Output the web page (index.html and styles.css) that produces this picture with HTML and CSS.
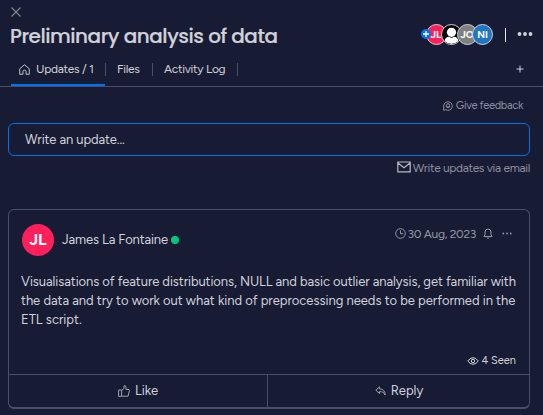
FILE: index.html
```html
<!DOCTYPE html>
<html lang="en">
<head>
<meta charset="utf-8">
<title>Preliminary analysis of data</title>
<link rel="stylesheet" href="styles.css">
</head>
<body>
<header class="header">
  <svg class="close" width="10" height="10" viewBox="0 0 10 10"><path d="M.5.5l9 9M9.5.5l-9 9"/></svg>
  <div class="title-row">
    <h1><span class="title">Preliminary analysis of data</span></h1>
    <div class="people">
      <span class="add"><svg width="10" height="10" viewBox="0 0 10 10"><path d="M5 2v6M2 5h6"/></svg></span>
      <span class="avatar pink">JL</span>
      <span class="avatar person"><svg width="19" height="19" viewBox="0 0 19 19"><circle cx="9.5" cy="7.300" r="4.600"/><path d="M2.500 16c.5-3 2.500-4.300 4.500-4.300q2.500 2 5 0c2 0 4 1.300 4.500 4.300q-3 3-7 3t-7-3z"/></svg></span>
      <span class="avatar gray">JO</span>
      <span class="avatar blue">NI</span>
    </div>
    <i class="rule"></i>
    <svg class="more" width="16" height="6" viewBox="0 0 16 6"><circle cx="2.500" cy="3" r="1.900"/><circle cx="8" cy="3" r="1.900"/><circle cx="13.500" cy="3" r="1.900"/></svg>
  </div>
  <nav class="tabs">
    <a class="tab active"><svg class="icon" width="11" height="11" viewBox="0 0 12 12"><path d="M.8 5.200L6 .8l5.200 4.400v6H7.700V8.300q0-1.600-1.700-1.600T4.300 8.300v2.900H.8z"/></svg><span class="t-updates">Updates / 1</span></a>
    <a class="tab files"><span class="t-files">Files</span></a>
    <a class="tab log"><span class="t-log">Activity Log</span></a>
    <svg class="plus" width="8" height="8" viewBox="0 0 8 8"><path d="M4 .5v7M.5 4h7"/></svg>
  </nav>
</header>
<main>
  <div class="feedback"><svg class="icon" width="10" height="10" viewBox="0 0 10 10"><path d="M.7 9.300V5a4.300 4.300 0 1 1 2 3.700zM2.900 5.500q2.100 2.500 4.200 0"/><circle cx="5" cy="4.400" r="1.700"/></svg><span class="t-feedback">Give feedback</span></div>
  <div class="composer"><span class="t-write">Write an update...</span></div>
  <div class="email"><svg class="icon" width="14" height="12" viewBox="0 0 14 12"><path d="M.8 1h12.400v9.800H.8zM1 2l6 4.800L13 2"/></svg><span class="t-email">Write updates via email</span></div>
  <article class="card">
    <div class="author">
      <span class="face">JL</span>
      <span class="t-name">James La Fontaine</span><i class="online"></i>
      <div class="meta">
        <svg class="icon" width="11" height="11" viewBox="0 0 11 11"><circle cx="5.500" cy="5.500" r="4.800"/><path d="M5.500 2.500v3.200h2.700"/></svg>
        <span class="t-date">30 Aug, 2023</span>
        <svg class="icon bell" width="10" height="11" viewBox="0 0 10 11"><path d="M.8 8.500h8.400L8 6.800V4a3 3 0 0 0-6 0v2.800zM3.800 9.800q1.200 1 2.400 0"/></svg>
        <svg class="dots" width="10" height="3" viewBox="0 0 10 3"><circle cx="1.300" cy="1.500" r=".9"/><circle cx="5" cy="1.500" r=".9"/><circle cx="8.700" cy="1.500" r=".9"/></svg>
      </div>
    </div>
    <p class="text"><span class="l1">Visualisations of feature distributions, NULL and basic outlier analysis, get familiar with</span><br><span class="l2">the data and try to work out what kind of preprocessing needs to be performed in the</span><br><span class="l3">ETL script.</span></p>
    <div class="seen"><svg class="icon" width="12" height="8" viewBox="0 0 12 8"><path d="M.7 4Q3 .7 6 .7T11.300 4Q9 7.300 6 7.300T.7 4z"/><circle cx="6" cy="4" r="1.700"/></svg><span class="t-seen">4 Seen</span></div>
    <footer class="actions">
      <button class="action like"><svg class="icon" width="12" height="12" viewBox="0 0 12 12"><path d="M.6 5h3v6.300h-3zM3.600 5.500L6 3.500V.8q2-.5 2 1.500v2.200h3q.7.600.3 1.500l-1.200 5.200H3.600"/></svg><span class="t-like">Like</span></button>
      <button class="action reply"><svg class="icon" width="11" height="10" viewBox="0 0 11 10"><path d="M4.500.9L.8 4.200l3.700 3.300V5.600q4-.3 5.700 3.500Q10 3 4.500 2.800z"/></svg><span class="t-reply">Reply</span></button>
    </footer>
  </article>
</main>
</body>
</html>
```
FILE: styles.css
```css
* { box-sizing: border-box; }
body { margin: 0; height: 415px; overflow: hidden; background: #181b34; color: #d0d2da; font: 12px/16px Figtree, Inter, sans-serif; white-space: nowrap; }
svg { display: block; flex: none; overflow: visible; }
.icon { fill: none; stroke: currentColor; stroke-width: 1; }
.header { height: 87px; border-bottom: 1px solid #4b4e69; padding: 7px 9px 0 11px; }
.close { stroke: #85868d; stroke-width: 1.1; }
.title-row { display: flex; align-items: center; height: 32px; margin-top: 3px; }
h1 { margin: 0 0 0 -1px; flex: 1; font: 500 20px/28px Poppins, Inter, sans-serif; }
.title { letter-spacing: -.49px; -webkit-text-stroke: .2px currentColor; }
.people { display: flex; align-items: center; position: relative; margin: -4px 1px 0 0; }
.add { position: absolute; left: -5px; top: 5px; z-index: 2; width: 10px; height: 10px; border-radius: 50%; background: #0073ea; }
.add svg { stroke: #fff; stroke-width: 1.3; }
.avatar { width: 21px; height: 21px; border: 1px solid #d0d2da; border-radius: 50%; margin-left: -5.5px; display: flex; align-items: center; justify-content: center; color: #fff; font: 700 10px/19px Figtree, Inter, sans-serif; overflow: hidden; }
.avatar.pink { margin-left: 0; background: #ff1f5a; }
.person { background: #000; }
.person svg { fill: #fff; }
.gray { background: #808080; }
.blue { background: #1f76c2; }
.rule { width: 1px; height: 14px; background: #e8e8ee; margin: -2px 12px 0 11px; }
.more { fill: #d0d2da; margin: -5px 1px 0 -1px; }
.tabs { display: flex; height: 34px; align-items: stretch; }
.tab { display: flex; align-items: center; position: relative; }
.tab::after { content: ""; position: absolute; right: 0; top: 11px; width: 1px; height: 13px; background: #4b4e69; }
.active { width: 94px; margin-right: 1px; padding: 2px 0 0 8px; gap: 6px; border-bottom: 2px solid #0073ea; }
.active::after { right: -1px; }
.files { width: 47px; padding-left: 11px; }
.log { width: 85px; padding-left: 11px; }
.t-updates, .t-files, .t-log { letter-spacing: -.3px; }
.plus { margin: 13px 10px 0 auto; stroke: #d0d2da; }
main { padding: 0 13px 0 8px; }
.feedback { display: flex; align-items: center; justify-content: flex-end; height: 36px; gap: 3px; padding: 1px 7px 0 0; color: #8e90a0; font-size: 11px; letter-spacing: -.3px; }
.composer { height: 33px; border: 1px solid #0073ea; border-radius: 6px; padding: 8px 16px; font-size: 13px; letter-spacing: -.1px; }
.email { display: flex; align-items: center; justify-content: flex-end; height: 24px; gap: 2px; color: #8e90a0; letter-spacing: -.35px; }
.email svg { color: #b8bac6; stroke-width: 1.2; margin-top: -2px; }
.card { height: 200px; margin-top: 29px; border: 1px solid #4b4e69; border-bottom-width: 2px; border-radius: 6px; display: flex; flex-direction: column; }
.author { display: flex; align-items: center; padding: 14px 17px 0 13px; height: 46px; }
.face { width: 32px; height: 32px; border-radius: 50%; background: #ff1f5a; color: #fff; text-align: center; font: 700 16px/32px Figtree, Inter, sans-serif; margin-right: 8px; }
.t-name { font-size: 13px; letter-spacing: -.12px; }
.online { width: 8px; height: 8px; border-radius: 50%; background: #00c875; margin-left: 3px; }
.meta { display: flex; align-items: center; margin: -13px 0 0 auto; color: #9699a6; }
.t-date { margin: 0 7px 0 2px; letter-spacing: -.33px; }
.dots { margin-left: 9px; fill: currentColor; }
.text { margin: 16px 0 0 12px; font-size: 13px; line-height: 19px; }
.l1 { letter-spacing: -.08px; }
.l2 { letter-spacing: -.025px; }
.seen { display: flex; align-items: center; justify-content: flex-end; margin: 24px 13px 0 0; gap: 3px; font-size: 11px; }
.actions { display: flex; margin-top: auto; height: 33px; border-top: 1px solid #4b4e69; }
.action { flex: 1; display: flex; align-items: center; justify-content: center; gap: 5px; padding: 0; border: 0; background: none; color: #d0d2da; font: 13px/16px Figtree, Inter, sans-serif; }
.action .icon { color: #a0a2af; }
.like { flex: 0 0 259px; border-right: 1px solid #4b4e69; }
.reply { padding-left: 1px; }
```
